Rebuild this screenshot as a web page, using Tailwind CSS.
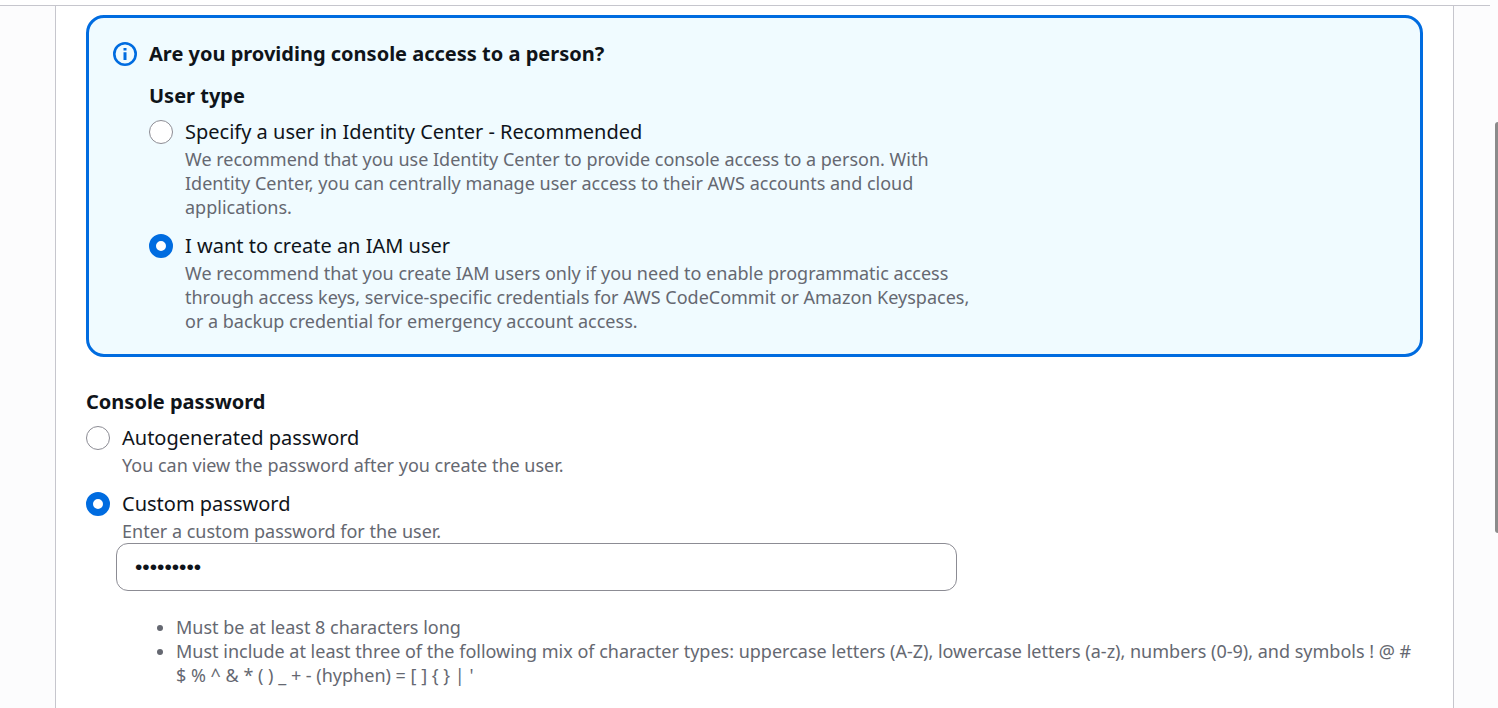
<!DOCTYPE html>
<html lang="en">
<head>
<meta charset="utf-8">
<meta name="viewport" content="width=device-width, initial-scale=1">
<title>Create user</title>
<script src="https://cdn.jsdelivr.net/npm/@tailwindcss/browser@4"></script>
</head>
<body class="bg-[#fcfcfd] font-['Noto_Sans',sans-serif] text-[20px] leading-[30px] text-[#0f141a]">
<div class="min-h-screen overflow-hidden">
  <div class="mr-2 h-[6px] border-b border-[#c6c6cd] bg-white"></div>
  <main class="mr-[44px] ml-[55px] min-h-[calc(100vh-6px)] border-x border-[#c6c6cd] bg-white px-[30px] pt-[9px] pb-6">
    <section class="flex gap-3 rounded-[18px] border-3 border-[#006ce0] bg-[#f0fbff] px-6 py-[21px]">
      <svg class="mt-[3px] size-6 shrink-0" viewBox="0 0 24 24" fill="none" aria-hidden="true">
        <circle cx="12" cy="12" r="10.7" stroke="#006ce0" stroke-width="2.600"/>
        <path d="M10.500 6h3v2.500h-3zM10.500 10.300h3V18h-3z" fill="#006ce0"/>
      </svg>
      <div>
        <h2 class="font-bold">Are you providing console access to a person?</h2>
        <fieldset class="mt-3 max-w-[826px]">
          <legend class="mb-[6px] font-bold">User type</legend>
          <div class="flex gap-3">
            <input type="radio" name="user-type" id="identity-center" aria-describedby="identity-center-help" class="mt-[3px] size-6 shrink-0 appearance-none rounded-full border border-[#8c8c94] bg-white checked:border-7 checked:border-[#006ce0]">
            <div>
              <label for="identity-center" class="block">Specify a user in Identity Center - Recommended</label>
              <p id="identity-center-help" class="text-lg leading-6 text-[#656871]">We recommend that you use Identity Center to provide console access to a person. With Identity Center, you can centrally manage user access to their AWS accounts and cloud applications.</p>
            </div>
          </div>
          <div class="mt-3 flex gap-3">
            <input type="radio" name="user-type" id="iam-user" checked aria-describedby="iam-user-help" class="mt-[3px] size-6 shrink-0 appearance-none rounded-full border border-[#8c8c94] bg-white checked:border-7 checked:border-[#006ce0]">
            <div>
              <label for="iam-user" class="block">I want to create an IAM user</label>
              <p id="iam-user-help" class="text-lg leading-6 text-[#656871]">We recommend that you create IAM users only if you need to enable programmatic access through access keys, service-specific credentials for AWS CodeCommit or Amazon Keyspaces, or a backup credential for emergency account access.</p>
            </div>
          </div>
        </fieldset>
      </div>
    </section>

    <fieldset class="mt-[30px]">
      <legend class="mb-[6px] font-bold">Console password</legend>
      <div class="flex gap-3">
        <input type="radio" name="password-type" id="auto-password" aria-describedby="auto-password-help" class="mt-[3px] size-6 shrink-0 appearance-none rounded-full border border-[#8c8c94] bg-white checked:border-7 checked:border-[#006ce0]">
        <div>
          <label for="auto-password" class="block">Autogenerated password</label>
          <p id="auto-password-help" class="text-lg leading-6 text-[#656871]">You can view the password after you create the user.</p>
        </div>
      </div>
      <div class="mt-3 flex gap-3">
        <input type="radio" name="password-type" id="custom-password" checked aria-describedby="custom-password-help" class="mt-[3px] size-6 shrink-0 appearance-none rounded-full border border-[#8c8c94] bg-white checked:border-7 checked:border-[#006ce0]">
        <div>
          <label for="custom-password" class="block">Custom password</label>
          <p id="custom-password-help" class="text-lg leading-6 text-[#656871]">Enter a custom password for the user.</p>
        </div>
      </div>
    </fieldset>
    <div class="ml-[30px]">
      <input type="password" value="Passw0rd!" aria-label="Custom password" aria-describedby="password-rules" class="block h-12 w-[841px] max-w-full rounded-xl border border-[#8c8c94] bg-white px-[18px] font-['Liberation_Sans',sans-serif] text-[21px]">
      <ul id="password-rules" class="mt-6 list-disc pl-[60px] text-lg leading-6 text-[#656871]">
        <li>Must be at least 8 characters long</li>
        <li>Must include at least three of the following mix of character types: uppercase letters (A-Z), lowercase letters (a-z), numbers (0-9), and symbols ! @ # $ % ^ &amp; * ( ) _ + - (hyphen) = [ ] { } | '</li>
      </ul>
    </div>
  </main>
</div>
<!-- Scroll thumb over the right window edge -->
<div class="fixed top-[122px] -right-[3px] h-[58vh] w-[6px] rounded-full bg-[#8b8b8b]" aria-hidden="true"></div>
</body>
</html>
